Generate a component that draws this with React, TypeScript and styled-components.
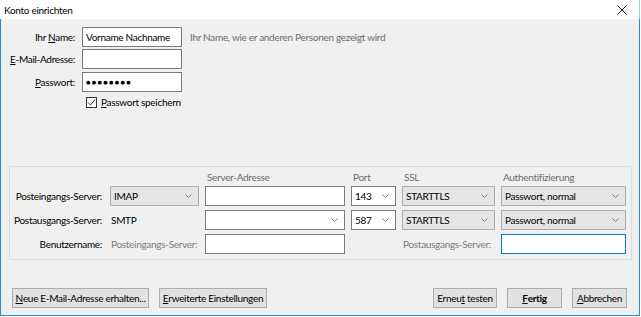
import styled, { createGlobalStyle } from 'styled-components';

const GlobalStyle = createGlobalStyle`
  * { box-sizing: border-box; }
  html, body {
    margin: 0;
    padding: 0;
    background: #ffffff;
  }
  body {
    font-family: Lato, "Liberation Sans", sans-serif;
    font-size: 10px;
    letter-spacing: -0.3px;
    color: #000000;
  }
`;

const Chevron = () => (
  <svg width="7" height="4" viewBox="0 0 7 4">
    <polyline points="0.5,0.5 3.5,3.5 6.5,0.5" fill="none" stroke="#808080" strokeWidth="1" />
  </svg>
);

const CheckMark = () => (
  <svg width="9" height="9" viewBox="0 0 9 9">
    <polyline points="1,4.5 3.5,7 8,1.5" fill="none" stroke="#333333" strokeWidth="1" />
  </svg>
);

const CloseIcon = () => (
  <svg width="10" height="10" viewBox="0 0 10 10">
    <line x1="0.5" y1="0.5" x2="9.5" y2="9.5" stroke="#222" strokeWidth="1" />
    <line x1="9.5" y1="0.5" x2="0.5" y2="9.5" stroke="#222" strokeWidth="1" />
  </svg>
);

function App() {
  return (
    <>
      <GlobalStyle />
      <Window>
        <TitleBar>
          <Title>Konto einrichten</Title>
          <CloseButton>
            <CloseIcon />
          </CloseButton>
        </TitleBar>
        <Body>
          <AccountForm>
            <Label>
              Ihr <Key>N</Key>ame:
            </Label>
            <Field>Vorname Nachname</Field>
            <Hint>Ihr Name, wie er anderen Personen gezeigt wird</Hint>

            <Label>
              <Key>E</Key>-Mail-Adresse:
            </Label>
            <Field />
            <span />

            <Label>
              <Key>P</Key>asswort:
            </Label>
            <Field>
              <Dots>●●●●●●●●</Dots>
            </Field>
            <span />

            <CheckRow>
              <CheckBox>
                <CheckMark />
              </CheckBox>
              <span>
                <Key>P</Key>asswort speichern
              </span>
            </CheckRow>
          </AccountForm>

          <ServerBox>
            <ServerGrid $header>
              <span />
              <span />
              <ColumnHead>Server-Adresse</ColumnHead>
              <ColumnHead>Port</ColumnHead>
              <ColumnHead>SSL</ColumnHead>
              <ColumnHead>Authentifizierung</ColumnHead>
            </ServerGrid>
            <ServerGrid>
              <RowLabel>Posteingangs-Server:</RowLabel>
              <Select>
                IMAP
                <Chevron />
              </Select>
              <Field />
              <Field $combo>
                143
                <Chevron />
              </Field>
              <Select>
                STARTTLS
                <Chevron />
              </Select>
              <Select>
                Passwort, normal
                <Chevron />
              </Select>

              <RowLabel>Postausgangs-Server:</RowLabel>
              <PlainValue>SMTP</PlainValue>
              <Field $combo>
                <span />
                <Chevron />
              </Field>
              <Field $combo>
                587
                <Chevron />
              </Field>
              <Select>
                STARTTLS
                <Chevron />
              </Select>
              <Select>
                Passwort, normal
                <Chevron />
              </Select>

              <RowLabel>Benutzername:</RowLabel>
              <PlainValue $muted>Posteingangs-Server:</PlainValue>
              <Field />
              <span />
              <PlainValue $muted>Postausgangs-Server:</PlainValue>
              <Field $focused />
            </ServerGrid>
          </ServerBox>

          <ButtonRow>
            <ButtonGroup>
              <Button $width={137}>
                <Key>N</Key>eue E-Mail-Adresse erhalten...
              </Button>
              <Button $width={108}>
                <Key>E</Key>rweiterte Einstellungen
              </Button>
            </ButtonGroup>
            <ButtonGroup>
              <Button $width={64}>
                Erneu<Key>t</Key>&nbsp;testen
              </Button>
              <Button $width={55} $primary>
                <Key>F</Key>ertig
              </Button>
              <Button $width={55}>
                <Key>A</Key>bbrechen
              </Button>
            </ButtonGroup>
          </ButtonRow>
        </Body>
      </Window>
    </>
  );
}

export default App;

const Window = styled.div`
  width: 640px;
  height: 316px;
  display: flex;
  flex-direction: column;
`;

const TitleBar = styled.div`
  height: 19px;
  display: flex;
  align-items: center;
  justify-content: space-between;
  padding-left: 4px;
  background: #ffffff;
  border-right: 1px solid #9fcbf0;
`;

const Title = styled.span`
  color: #000000;
`;

const CloseButton = styled.div`
  width: 30px;
  height: 19px;
  display: flex;
  align-items: center;
  justify-content: center;
  margin-right: 2px;
`;

const Body = styled.div`
  flex: 1;
  display: flex;
  flex-direction: column;
  padding: 8px 7px 7px 8px;
  background: #f0f0f0;
  border: 1px solid #2b88d8;
  border-top: none;
`;

const AccountForm = styled.div`
  display: grid;
  grid-template-columns: 66px 100px auto;
  grid-auto-rows: 20px;
  column-gap: 7px;
  row-gap: 2.3px;
  align-items: center;
`;

const Label = styled.span`
  justify-self: end;
  white-space: nowrap;
`;

const Key = styled.span`
  text-decoration: underline;
`;

const Hint = styled.span`
  padding-left: 1px;
  color: #6d6d6d;
  white-space: nowrap;
`;

const Field = styled.div<{ $focused?: boolean; $combo?: boolean }>`
  height: 20px;
  display: flex;
  align-items: center;
  justify-content: space-between;
  padding: 0 ${p => (p.$combo ? '6px' : '3px')} 0 3px;
  background: #ffffff;
  border: 1px solid ${p => (p.$focused ? '#0078d7' : '#7a7a7a')};
  white-space: nowrap;
  overflow: hidden;
`;

const Dots = styled.span`
  font-family: "DejaVu Sans", sans-serif;
  font-size: 5px;
  letter-spacing: 1.4px;
`;

const CheckRow = styled.div`
  grid-column: 2 / span 2;
  align-self: start;
  display: flex;
  align-items: center;
  gap: 4px;
  margin-top: 2px;
  padding-left: 4px;
  height: 13px;
`;

const CheckBox = styled.div`
  width: 11px;
  height: 11px;
  display: flex;
  align-items: center;
  justify-content: center;
  background: #ffffff;
  border: 1px solid #333333;
`;

const ServerBox = styled.div`
  margin-top: 52px;
  padding: 0 5px 5px 0;
  border: 1px solid #dcdcdc;
`;

const ServerGrid = styled.div<{ $header?: boolean }>`
  display: grid;
  grid-template-columns: 94px 89px 140px 45px 93px 125px;
  column-gap: 6px;
  row-gap: 4px;
  grid-auto-rows: ${p => (p.$header ? '19px' : '20px')};
  align-items: center;
`;

const ColumnHead = styled.span`
  padding-left: 2px;
  padding-top: 1px;
  color: #6d6d6d;
  white-space: nowrap;
`;

const RowLabel = styled.span`
  justify-self: end;
  padding-right: 2px;
  white-space: nowrap;
`;

const Select = styled.div`
  height: 20px;
  display: flex;
  align-items: center;
  justify-content: space-between;
  padding: 0 6px 0 3px;
  background: #e5e5e5;
  border: 1px solid #acacac;
  white-space: nowrap;
`;

const PlainValue = styled.span<{ $muted?: boolean }>`
  padding-left: 1px;
  color: ${p => (p.$muted ? '#7a7a7a' : '#000000')};
  white-space: nowrap;
`;

const ButtonRow = styled.div`
  margin-top: auto;
  display: flex;
  justify-content: space-between;
  padding: 0 5px 0 3px;
`;

const ButtonGroup = styled.div`
  display: flex;
  gap: 10px;
`;

const Button = styled.div<{ $width: number; $primary?: boolean }>`
  width: ${p => p.$width}px;
  height: 20px;
  display: flex;
  align-items: center;
  justify-content: center;
  background: #e1e1e1;
  border: 1px solid #adadad;
  font-weight: ${p => (p.$primary ? 700 : 400)};
  white-space: nowrap;
`;
